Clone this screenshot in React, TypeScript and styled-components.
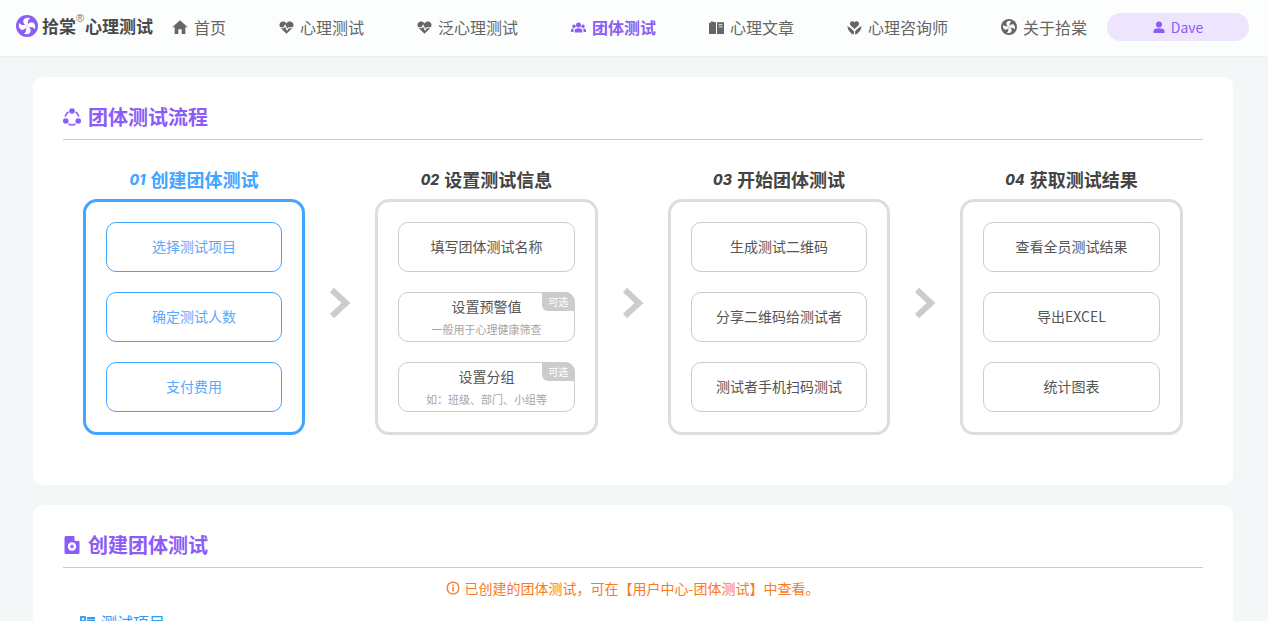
import { FC, ReactNode } from 'react';
import styled, { createGlobalStyle } from 'styled-components';

const purple = '#8b5cf6';
const blue = '#42a5ff';
const FONT = `'Noto Sans CJK SC', 'Noto Sans', sans-serif`;

const GlobalStyle = createGlobalStyle`
  html, body {
    margin: 0;
    height: 621px;
    overflow: hidden;
    background: #f4f7f8;
    font-family: ${FONT};
  }
  * { box-sizing: border-box; }
`;

const SC = {
  Nav: styled.header`
    display: flex;
    align-items: center;
    height: 57px;
    padding: 0 0 2px 16px;
    background: #fcfefe;
    border-bottom: 1px solid #edf0f1;
  `,
  Logo: styled.div`
    display: flex;
    align-items: center;
    width: 156px;
    margin-top: -2px;
    font-size: 17px;
    font-weight: 700;
    color: #4a4a4a;
    white-space: nowrap;
  `,
  Reg: styled.sup`
    width: 9px;
    margin: -2px 0 0;
    font-family: 'Liberation Sans', sans-serif;
    font-size: 11px;
    font-weight: 400;
    line-height: 12px;
    color: #777;
    align-self: flex-start;
  `,
  LogoText: styled.span`
    display: flex;
    margin-left: 4px;
    line-height: 24px;
  `,
  Menu: styled.nav`
    display: flex;
    align-items: center;
    gap: 53px;
  `,
  MenuItem: styled.a<{ $active?: boolean }>`
    display: flex;
    align-items: center;
    gap: 6px;
    font-size: 16px;
    font-weight: ${(p) => (p.$active ? 700 : 400)};
    color: ${(p) => (p.$active ? purple : '#666')};
    white-space: nowrap;
  `,
  User: styled.div`
    display: flex;
    align-items: center;
    justify-content: center;
    gap: 6px;
    width: 142px;
    height: 28px;
    margin-left: 20px;
    border-radius: 14px;
    background: #ece5fd;
    color: ${purple};
    font-size: 14px;
  `,
  Main: styled.main`
    display: flex;
    flex-direction: column;
    gap: 20px;
    width: 1200px;
    margin: 20px 0 0 33px;
  `,
  Card: styled.section`
    padding: 22px 30px 50px;
    background: #fff;
    border-radius: 10px;
  `,
  CardTitle: styled.h2`
    display: flex;
    align-items: flex-start;
    gap: 7px;
    height: 41px;
    margin: 0;
    border-bottom: 1px solid #ccc;
    color: ${purple};
    font-size: 20px;
    font-weight: 700;
    line-height: 36px;

    svg {
      margin-top: 9px;
    }
  `,
  Flow: styled.div`
    display: grid;
    grid-template-columns: repeat(4, 1fr);
    column-gap: 70px;
    margin: 26px 20.25px 0 19.75px;
  `,
  Step: styled.div<{ $active?: boolean }>`
    position: relative;
    color: ${(p) => (p.$active ? blue : '#444')};
  `,
  StepTitle: styled.h3`
    display: flex;
    align-items: center;
    justify-content: center;
    gap: 5px;
    height: 27px;
    margin: 0 0 6px;
    font-size: 18px;
    font-weight: 700;
    line-height: 27px;
  `,
  StepNo: styled.i`
    font-family: 'Inter', 'Roboto', sans-serif;
    font-size: 14px;
    font-weight: 800;
  `,
  StepBox: styled.div<{ $active?: boolean }>`
    display: flex;
    flex-direction: column;
    gap: 20px;
    height: 236px;
    padding: 20px;
    border: 3px solid ${(p) => (p.$active ? blue : '#ddd')};
    border-radius: 14px;
  `,
  Item: styled.div<{ $active?: boolean }>`
    position: relative;
    display: flex;
    flex-direction: column;
    align-items: center;
    justify-content: center;
    height: 50px;
    padding-bottom: 2px;
    border: 1px solid ${(p) => (p.$active ? blue : '#ccc')};
    border-radius: 10px;
    color: ${(p) => (p.$active ? '#5aa9fb' : '#555')};
    font-size: 14px;
    line-height: 20px;
  `,
  ItemHint: styled.span`
    color: #a5a5a5;
    font-size: 11px;
    line-height: 16px;
    margin-top: 5px;
    margin-bottom: -1px;
  `,
  Optional: styled.span`
    position: absolute;
    top: -1px;
    right: -1px;
    width: 33px;
    height: 19px;
    background: #ccc;
    border-radius: 0 10px 0 6px;
    color: #fff;
    font-size: 10px;
    line-height: 20px;
    text-align: center;
  `,
  Arrow: styled.svg`
    position: absolute;
    top: 121px;
    right: -46px;
    width: 22px;
    height: 32px;
  `,
  Notice: styled.p`
    display: flex;
    align-items: center;
    justify-content: center;
    gap: 5px;
    margin: 9px 0 0;
    padding-right: 1px;
    color: #fb7a1e;
    font-size: 14px;
    line-height: 22px;
  `,
  FieldLabel: styled.div`
    display: flex;
    align-items: center;
    gap: 6px;
    margin: 11px 0 0 17px;
    color: #2f9df4;
    font-size: 16px;
    line-height: 24px;
  `,
};

type IconProps = { size?: number };

const Pinwheel: FC<{ fill: string; blade: string; size: number }> = ({ fill, blade, size }) => (
  <svg width={size} height={size} viewBox="0 0 24 24">
    <circle cx="12" cy="12" r="12" fill={fill} />
    {[0, 90, 180, 270].map((a) => (
      <path
        key={a}
        transform={`rotate(${a} 12 12)`}
        d="M12 12C8.500 10.500 7 7.500 8.500 5 10 3 13 2.500 15.500 3.500 13.500 4.500 12.800 7 13 9.500 13 10.500 12.600 11.400 12 12Z"
        fill={blade}
      />
    ))}
  </svg>
);

const HomeIcon: FC<IconProps> = ({ size = 16 }) => (
  <svg width={size} height={size} viewBox="0 0 24 24" fill="#666">
    <path d="M12 2 23.500 12.500H20V22.500H14.500V15.500H9.500V22.500H4V12.500H.5Z" />
  </svg>
);

const PulseHeart: FC<IconProps> = ({ size = 15 }) => (
  <svg width={size} height={size} viewBox="0 0 24 24">
    <path
      d="M12 22 2.600 12.600C-.4 9.600.4 4.600 3.800 3 6.800 1.600 10 2.600 12 5.400 14 2.600 17.200 1.600 20.200 3c3.400 1.600 4.200 6.600 1.200 9.600Z"
      fill="#666"
    />
    <path d="M0 12.400H7.500L9.800 8.800 13 15.600 15.200 12.400H24" fill="none" stroke="#fcfefe" strokeWidth="1.800" />
  </svg>
);

const GroupIcon: FC<IconProps> = ({ size = 15 }) => (
  <svg width={size} height={size} viewBox="0 0 24 24" fill={purple}>
    <circle cx="12" cy="8" r="4" />
    <circle cx="4.800" cy="10" r="2.700" />
    <circle cx="19.200" cy="10" r="2.700" />
    <path d="M5.800 20V17C5.800 14 8.500 13 12 13S18.200 14 18.200 17V20Z" />
    <path d="M0 19V16.500C0 14.500 2 13.600 4.600 13.800 4 14.800 3.800 16 3.800 19ZM24 19V16.500C24 14.500 22 13.600 19.400 13.800 20 14.800 20.200 16 20.200 19Z" />
  </svg>
);

const BookIcon: FC<IconProps> = ({ size = 15 }) => (
  <svg width={size} height={size} viewBox="0 0 24 24" fill="#666">
    <path d="M0 4.500 3 4.500 3 2 11.200 3.500V22.500L0 22.500Z" />
    <path d="M12.800 3.500H24V22.500H12.800Z" />
    <path d="M15.500 7.500H21.500M15.500 11H21.500" stroke="#fcfefe" strokeWidth="1.400" />
  </svg>
);

const CareIcon: FC<IconProps> = ({ size = 15 }) => (
  <svg width={size} height={size} viewBox="0 0 24 24" fill="#666">
    <path d="M12 14.500 5.800 8.600C3.600 6 5 1.800 8.600 1.800 10 1.800 11.300 2.500 12 3.700 12.700 2.500 14 1.800 15.400 1.800 19 1.800 20.400 6 18.200 8.600Z" />
    <path d="M.5 9.500C3.500 11.500 9 14.500 11 18V23C6.500 22.500 1.500 17 .5 9.500ZM23.500 9.500C20.500 11.500 15 14.500 13 18V23C17.500 22.500 22.500 17 23.500 9.500Z" />
  </svg>
);

const UserIcon: FC<IconProps> = ({ size = 12 }) => (
  <svg width={size} height={size} viewBox="0 0 24 24" fill={purple}>
    <circle cx="12" cy="7" r="6" />
    <path d="M1 24V20C1 16 5 14.500 12 14.500S23 16 23 20V24Z" />
  </svg>
);

const FlowIcon: FC = () => (
  <svg width="18" height="18" viewBox="0 0 18 18">
    <path
      d="M5.400 4A7 7 0 0 0 2.100 8.700M15.900 8.700A7 7 0 0 0 12.600 4M5.500 16A7 7 0 0 0 12.500 16"
      fill="none"
      stroke={purple}
      strokeWidth="1.700"
    />
    <circle cx="9" cy="3" r="2.800" fill={purple} />
    <circle cx="2.800" cy="13" r="2.800" fill={purple} />
    <circle cx="15.200" cy="13" r="2.800" fill={purple} />
  </svg>
);

const FileIcon: FC = () => (
  <svg width="18" height="18" viewBox="0 0 18 18">
    <path d="M3 0H11L16.500 5.500V16.500A1.500 1.500 0 0 1 15 18H3A1.500 1.500 0 0 1 1.500 16.500V1.500A1.500 1.500 0 0 1 3 0Z" fill={purple} />
    <circle cx="9" cy="10.500" r="4.200" fill="#fff" />
    <path d="M9 8.500V12.500M7 10.500H11" stroke={purple} strokeWidth="1.300" />
    <path d="M11.500 0 16.500 5H12.500A1 1 0 0 1 11.500 4Z" fill="#fff" />
  </svg>
);

const InfoIcon: FC = () => (
  <svg width="14" height="14" viewBox="0 0 14 14" fill="none" stroke="#fb7a1e">
    <circle cx="7" cy="7" r="5.900" strokeWidth="1.300" />
    <path d="M7 3.400V4.900M7 6.100V10.400" strokeWidth="1.500" />
  </svg>
);

const ListIcon: FC = () => (
  <svg width="15" height="15" viewBox="0 0 15 15" fill="none" stroke="#2f9df4" strokeWidth="1.800">
    <rect x="1" y="2" width="4" height="4" />
    <path d="M7 3H15M7 5.500H15" />
    <rect x="1" y="9" width="4" height="4" />
    <path d="M7 10H15M7 12.500H15" />
  </svg>
);

type Entry = { text: string; hint?: string };

const steps: { no: string; title: string; items: Entry[] }[] = [
  { no: '01', title: '创建团体测试', items: [{ text: '选择测试项目' }, { text: '确定测试人数' }, { text: '支付费用' }] },
  {
    no: '02',
    title: '设置测试信息',
    items: [
      { text: '填写团体测试名称' },
      { text: '设置预警值', hint: '一般用于心理健康筛查' },
      { text: '设置分组', hint: '如：班级、部门、小组等' },
    ],
  },
  { no: '03', title: '开始团体测试', items: [{ text: '生成测试二维码' }, { text: '分享二维码给测试者' }, { text: '测试者手机扫码测试' }] },
  { no: '04', title: '获取测试结果', items: [{ text: '查看全员测试结果' }, { text: '导出EXCEL' }, { text: '统计图表' }] },
];

const menu: { label: string; icon: ReactNode; active?: boolean }[] = [
  { label: '首页', icon: <HomeIcon /> },
  { label: '心理测试', icon: <PulseHeart /> },
  { label: '泛心理测试', icon: <PulseHeart /> },
  { label: '团体测试', icon: <GroupIcon />, active: true },
  { label: '心理文章', icon: <BookIcon /> },
  { label: '心理咨询师', icon: <CareIcon /> },
  { label: '关于拾棠', icon: <Pinwheel size={16} fill="#666" blade="#fcfefe" /> },
];

const App: FC = () => {
  return (
    <>
      <GlobalStyle />
      <SC.Nav>
        <SC.Logo>
          <Pinwheel size={22} fill={purple} blade="#fff" />
          <SC.LogoText>
            拾棠<SC.Reg>®</SC.Reg>心理测试
          </SC.LogoText>
        </SC.Logo>
        <SC.Menu>
          {menu.map((m) => (
            <SC.MenuItem key={m.label} $active={m.active}>
              {m.icon}
              {m.label}
            </SC.MenuItem>
          ))}
        </SC.Menu>
        <SC.User>
          <UserIcon />
          Dave
        </SC.User>
      </SC.Nav>
      <SC.Main>
        <SC.Card>
          <SC.CardTitle>
            <FlowIcon />
            团体测试流程
          </SC.CardTitle>
          <SC.Flow>
            {steps.map((s, i) => (
              <SC.Step key={s.no} $active={i === 0}>
                <SC.StepTitle>
                  <SC.StepNo>{s.no}</SC.StepNo>
                  {s.title}
                </SC.StepTitle>
                <SC.StepBox $active={i === 0}>
                  {s.items.map((it) => (
                    <SC.Item key={it.text} $active={i === 0}>
                      {it.text}
                      {it.hint && <SC.ItemHint>{it.hint}</SC.ItemHint>}
                      {it.hint && <SC.Optional>可选</SC.Optional>}
                    </SC.Item>
                  ))}
                </SC.StepBox>
                {i < 3 && (
                  <SC.Arrow viewBox="0 0 22 32">
                    <path d="M3 3 17 16 3 29" fill="none" stroke="#ccc" strokeWidth="6" />
                  </SC.Arrow>
                )}
              </SC.Step>
            ))}
          </SC.Flow>
        </SC.Card>
        <SC.Card>
          <SC.CardTitle>
            <FileIcon />
            创建团体测试
          </SC.CardTitle>
          <SC.Notice>
            <InfoIcon />
            已创建的团体测试，可在【用户中心-团体测试】中查看。
          </SC.Notice>
          <SC.FieldLabel>
            <ListIcon />
            测试项目
          </SC.FieldLabel>
        </SC.Card>
      </SC.Main>
    </>
  );
};

export default App;
